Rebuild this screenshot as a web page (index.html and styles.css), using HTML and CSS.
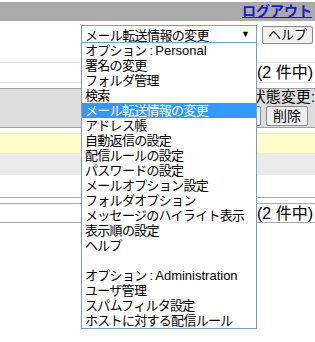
FILE: index.html
```html
<!DOCTYPE html>
<html lang="ja">
<head>
    <meta charset="UTF-8">
    <meta name="viewport" content="width=device-width, initial-scale=1.0">
    <title>メール</title>
    <link rel="stylesheet" href="styles.css">
</head>
<body>
    <div class="topbar">
        <a class="logout" href="#">ログアウト</a>
    </div>
    <div class="toolbar">
        <div class="select-wrap">
            <div class="select">
                <span class="select-text">メール転送情報の変更</span>
                <span class="arrow">▼</span>
            </div>
            <ul class="dropdown">
                <li>オプション : <span class="en">Personal</span></li>
                <li>署名の変更</li>
                <li>フォルダ管理</li>
                <li>検索</li>
                <li class="selected">メール転送情報の変更</li>
                <li>アドレス帳</li>
                <li>自動返信の設定</li>
                <li>配信ルールの設定</li>
                <li>パスワードの設定</li>
                <li>メールオプション設定</li>
                <li>フォルダオプション</li>
                <li>メッセージのハイライト表示</li>
                <li>表示順の設定</li>
                <li>ヘルプ</li>
                <li>&nbsp;</li>
                <li>オプション : <span class="en">Administration</span></li>
                <li>ユーザ管理</li>
                <li>スパムフィルタ設定</li>
                <li>ホストに対する配信ルール</li>
            </ul>
        </div>
        <button class="btn">ヘルプ</button>
    </div>
    <div class="pager">(2 件中)</div>
    <div class="actions">
        <div class="status">状態変更:</div>
        <div class="btn-row">
            <button class="btn">既読</button>
            <button class="btn">削除</button>
        </div>
    </div>
    <div class="msg unread"></div>
    <div class="msg read"></div>
    <div class="spacer"></div>
    <div class="pager bottom">(2 件中)</div>
</body>
</html>
```

FILE: styles.css
```css
html {
    background: #fff;
}
body {
    margin: 0;
    padding-top: 2px;
    min-height: 342px;
    box-sizing: border-box;
    font-family: "Liberation Sans", "Noto Sans CJK JP", sans-serif;
    color: #000;
}
.topbar {
    height: 19px;
    background-color: #aaaaaa;
    text-align: right;
    padding-right: 3px;
}
.logout {
    font-size: 14px;
    font-weight: bold;
    line-height: 19px;
    color: #1a1acc;
    text-decoration: underline;
}
.toolbar {
    height: 41px;
    box-sizing: border-box;
    padding-top: 4px;
    display: flex;
    justify-content: flex-end;
    align-items: flex-start;
    gap: 5px;
    padding-right: 2px;
}
.select-wrap {
    position: relative;
    width: 176px;
}
.select {
    height: 18px;
    box-sizing: border-box;
    border: 1px solid #7f9db9;
    display: flex;
    align-items: center;
    justify-content: space-between;
    padding: 0 6px 0 3px;
    font-size: 13px;
    letter-spacing: -0.6px;
}
.arrow {
    font-size: 9px;
    letter-spacing: 0;
}
.dropdown {
    position: absolute;
    top: 18px;
    left: 0;
    width: 176px;
    box-sizing: border-box;
    margin: 0;
    padding: 0;
    list-style: none;
    background: #fff;
    border: 1px solid #7f9db9;
    border-top: none;
    z-index: 2;
}
.dropdown li {
    height: 15px;
    line-height: 15px;
    font-size: 13px;
    letter-spacing: -0.7px;
    padding-left: 3px;
    white-space: nowrap;
}
.dropdown .en {
    letter-spacing: 0;
}
.dropdown .selected {
    background-color: #3399ff;
    color: #fff;
}
.btn {
    font-family: "Liberation Sans", "Noto Sans CJK JP", sans-serif;
    font-size: 13px;
    height: 18px;
    margin-top: 1px;
    padding: 0 5px;
    background-color: #f0f0f0;
    border: 1px solid #8a8a8a;
    border-radius: 2px;
    line-height: 14px;
}
.pager {
    height: 19px;
    border-top: 1px solid #dddddd;
    border-bottom: 1px solid #dddddd;
    text-align: right;
    font-size: 16px;
    line-height: 19px;
    padding-right: 2px;
    margin-bottom: 5px;
}
.actions {
    height: 38px;
    background-color: #dcdcdc;
    border-top: 1px solid #a0a0a0;
    border-bottom: 1px solid #a0a0a0;
    text-align: right;
    margin-bottom: 5px;
}
.status {
    font-size: 15px;
    line-height: 16px;
    height: 16px;
    overflow: hidden;
    white-space: nowrap;
}
.btn-row {
    display: flex;
    justify-content: flex-end;
    gap: 5px;
    padding-right: 7px;
}
.btn-row .btn {
    height: 20px;
    font-size: 14px;
    padding: 0 6px;
}
.msg {
    height: 19px;
}
.unread {
    background-color: #ffffcc;
    border-top: 1px solid #e8e8c8;
}
.read {
    height: 22px;
    background-color: #ebebeb;
}
.spacer {
    height: 22px;
    border-bottom: 1px solid #aaaaaa;
    margin-bottom: 5px;
}
.pager.bottom {
    border-color: #aaaaaa;
    height: 18px;
}
```
